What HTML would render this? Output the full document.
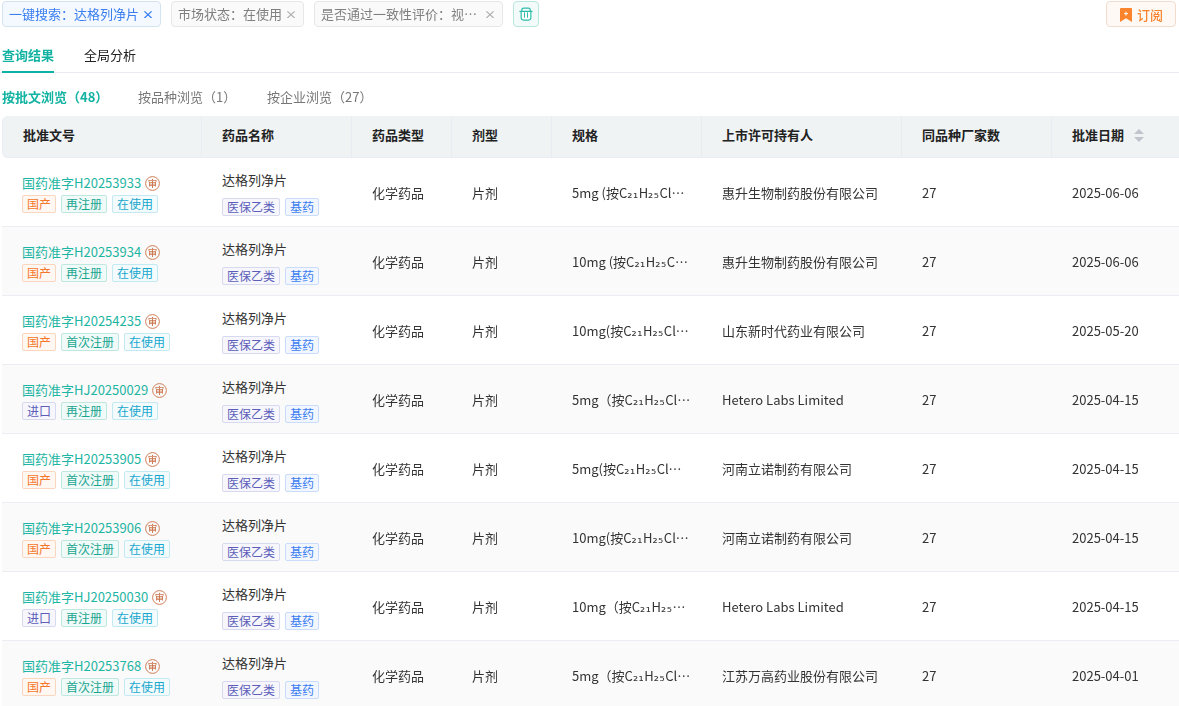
<!DOCTYPE html>
<html lang="zh-CN">
<head>
<meta charset="utf-8">
<title>查询结果</title>
<style>
*{box-sizing:border-box;margin:0;padding:0}
html,body{width:1179px;height:706px;overflow:hidden;background:#fff}
body{font-family:"Noto Sans CJK SC","Liberation Sans",sans-serif;font-size:13px;color:#333;position:relative}
.ftag{position:absolute;top:1px;height:26px;border:1px solid #e8e7e8;border-radius:4px;background:#fafafa;color:#7f7f80;font-size:13px;line-height:24px;padding-left:6px;white-space:nowrap}
.ftag.blue{background:#f4f8ff;border-color:#d4e3f0;color:#3a7ff0}
.ftag .tx{display:inline-block;vertical-align:top;overflow:hidden}
.ftag svg{position:absolute;right:8px;top:9px}
.trash{position:absolute;left:513px;top:1px;width:26px;height:26px;border:1px solid #b9e6df;border-radius:4px;background:#f3fbfa}
.trash svg{position:absolute;left:4px;top:4px}
.sub{position:absolute;left:1106px;top:1px;width:70px;height:26px;border:1px solid #f1dccd;border-radius:4px;background:#fff9f5;color:#f8842d;font-size:13px;line-height:24px;padding:1px 0 0 30px;font-weight:500;white-space:nowrap}
.sub svg{position:absolute;left:13px;top:6px}
.tabs{position:absolute;left:0;top:40px;width:1179px;height:33px;border-bottom:1px solid #e8e9f3}
.tab{position:absolute;top:0;height:33px;font-size:13px;line-height:30px;color:#222;white-space:nowrap}
.tab.on{color:#12b3a2;font-weight:700}
.tab.on:after{content:"";position:absolute;left:0;right:0;bottom:0;height:2px;background:#0cb3a4}
.stabs{position:absolute;left:2px;top:84px;height:26px;line-height:26px;font-size:13px;color:#777;white-space:nowrap}
.stabs span{position:absolute;top:0}
.stabs .on{color:#12b3a2;font-weight:700}
table{position:absolute;left:2px;top:116px;width:1200px;border-collapse:separate;border-spacing:0;table-layout:fixed}
th{height:42px;background:#eff3f4;font-weight:700;color:#222;text-align:left;padding:0 0 4px 20px;font-size:13px;border-right:1px solid #eaecf3;border-bottom:1px solid #e8eaf4;white-space:nowrap}
th:first-child{border-radius:6px 0 0 6px;border-left:1px solid #e9ecf5}
th .sort{display:inline-block;vertical-align:middle;margin-left:10px;margin-top:-1px}
td{height:69px;padding:0 0 0 20px;font-size:13px;color:#333;border-bottom:1px solid #ebedf3;vertical-align:middle;white-space:nowrap}
tr.alt td{background:#fafafa}
.no{color:#1db5a3;font-size:13px;line-height:24px;height:24px}
.sh{display:inline-block;vertical-align:top;width:15px;height:15px;margin:5px 0 0 4px;will-change:transform}
.sh svg{display:block}
.nm{line-height:24px;height:24px}
.tags{display:flex;height:18px}
.nm + .tags{margin-top:6px}
.t{display:inline-block;height:18px;line-height:16px;font-size:12px;padding:0 4px;border:1px solid;border-radius:2px;margin-right:5px}
.t.or{color:#f5762a;border-color:#fbd5bd;background:#fff7f1}
.t.gr{color:#19a590;border-color:#bfe7df;background:#f0faf8}
.t.cy{color:#17a7cd;border-color:#c3e9f3;background:#f3fbfd}
.t.pu{color:#5c5eba;border-color:#d7d9ef;background:#f6f6fc}
.t.bl{color:#3b7cf0;border-color:#c9dcfb;background:#f2f7ff}
.g{display:inline-block;will-change:transform;transform:translateY(-0.5px)}
.sub .tx,.tab span{display:inline-block}
.ftag .tx,.sub .tx,.tab span,.stabs span{will-change:transform}
.sp{white-space:nowrap}
.sb{font-family:"DejaVu Sans",sans-serif;letter-spacing:.5px}
</style>

</head>
<body>
<div class="ftag blue" style="left:2px;width:159px"><span class="tx">一键搜索：达格列净片</span><svg width="8" height="7.4" viewBox="0 0 8 8" preserveAspectRatio="none"><path d="M0.4 0.4L7.6 7.6M7.6 0.4L0.4 7.6" stroke="#3a7ff0" stroke-width="1.3" fill="none"/></svg></div>
<div class="ftag" style="left:171px;width:133px"><span class="tx">市场状态：在使用</span><svg width="8" height="7.4" viewBox="0 0 8 8" preserveAspectRatio="none"><path d="M0.4 0.4L7.6 7.6M7.6 0.4L0.4 7.6" stroke="#b0b0b2" stroke-width="1.2" fill="none"/></svg></div>
<div class="ftag" style="left:314px;width:189px"><span class="tx" style="width:160px">是否通过一致性评价：视…</span><svg width="8" height="7.4" viewBox="0 0 8 8" preserveAspectRatio="none"><path d="M0.4 0.4L7.6 7.6M7.6 0.4L0.4 7.6" stroke="#b0b0b2" stroke-width="1.2" fill="none"/></svg></div>
<div class="trash"><svg width="16" height="16" viewBox="0 0 16 16" fill="none" stroke="#2fbcaa" stroke-width="1.2" stroke-linecap="round"><path d="M3.15 5.3V11.6Q3.15 14.05 5.6 14.05H10.4Q12.85 14.05 12.85 11.6V5.3Z" fill="#fff" stroke="none"/><path d="M1.8 5.3H14.1"/><path d="M3.85 5.3V4Q3.85 2.05 5.8 2.05H10.3Q12.25 2.05 12.25 4V5.3"/><path d="M3.15 5.3V11.6Q3.15 14.05 5.6 14.05H10.4Q12.85 14.05 12.85 11.6V5.3"/><path d="M6.5 6.7V11.3M9.5 6.7V11.3" stroke-width="1"/></svg></div>
<div class="sub"><svg width="12" height="14" viewBox="0 0 12 14"><path d="M0 1Q0 0 1 0H11Q12 0 12 1V14L6 10.3L0 14Z" fill="#f9842c"/><path d="M4 5.6H8M6 3.6V7.6" stroke="#fff" stroke-width="1" fill="none"/></svg><span class="tx">订阅</span></div>
<div class="tabs">
  <div class="tab on" style="left:2px"><span>查询结果</span></div>
  <div class="tab" style="left:84px"><span>全局分析</span></div>
</div>
<div class="stabs">
  <span class="on" style="left:0">按批文浏览（48）</span>
  <span style="left:136px">按品种浏览（1）</span>
  <span style="left:265px">按企业浏览（27）</span>
</div>
<table>
<colgroup><col style="width:200px"><col style="width:150px"><col style="width:100px"><col style="width:100px"><col style="width:150px"><col style="width:200px"><col style="width:150px"><col style="width:150px"></colgroup>
<tr><th>批准文号</th><th>药品名称</th><th>药品类型</th><th>剂型</th><th>规格</th><th>上市许可持有人</th><th>同品种厂家数</th><th>批准日期<svg class="sort" width="10" height="13" viewBox="0 0 10 13"><path d="M5 0L10 5H0Z M0 8H10L5 13Z" fill="#c0c4cc"/></svg></th></tr>
<!--ROWS-->
<tr><td><div class="no">国药准字H20253933<span class="sh"><svg width="15" height="15" viewBox="0 0 15 15"><circle cx="7.5" cy="7.5" r="6.9" fill="none" stroke="#cf7d57" stroke-width="1"/><text x="7.5" y="11" font-size="9.5" font-weight="500" text-anchor="middle" fill="#cc7850">审</text></svg></span></div><div class="tags"><span class="t or">国产</span><span class="t gr">再注册</span><span class="t cy">在使用</span></div></td><td><div class="nm">达格列净片</div><div class="tags"><span class="t pu">医保乙类</span><span class="t bl">基药</span></div></td><td><span class="g">化学药品</span></td><td><span class="g">片剂</span></td><td><span class="g sp">5mg (按C<span class="sb">₂₁</span>H<span class="sb">₂₅</span>Cl…</span></td><td><span class="g">惠升生物制药股份有限公司</span></td><td><span class="g">27</span></td><td><span class="g">2025-06-06</span></td></tr>
<tr class="alt"><td><div class="no">国药准字H20253934<span class="sh"><svg width="15" height="15" viewBox="0 0 15 15"><circle cx="7.5" cy="7.5" r="6.9" fill="none" stroke="#cf7d57" stroke-width="1"/><text x="7.5" y="11" font-size="9.5" font-weight="500" text-anchor="middle" fill="#cc7850">审</text></svg></span></div><div class="tags"><span class="t or">国产</span><span class="t gr">再注册</span><span class="t cy">在使用</span></div></td><td><div class="nm">达格列净片</div><div class="tags"><span class="t pu">医保乙类</span><span class="t bl">基药</span></div></td><td><span class="g">化学药品</span></td><td><span class="g">片剂</span></td><td><span class="g sp">10mg (按C<span class="sb">₂₁</span>H<span class="sb">₂₅</span>C…</span></td><td><span class="g">惠升生物制药股份有限公司</span></td><td><span class="g">27</span></td><td><span class="g">2025-06-06</span></td></tr>
<tr><td><div class="no">国药准字H20254235<span class="sh"><svg width="15" height="15" viewBox="0 0 15 15"><circle cx="7.5" cy="7.5" r="6.9" fill="none" stroke="#cf7d57" stroke-width="1"/><text x="7.5" y="11" font-size="9.5" font-weight="500" text-anchor="middle" fill="#cc7850">审</text></svg></span></div><div class="tags"><span class="t or">国产</span><span class="t gr">首次注册</span><span class="t cy">在使用</span></div></td><td><div class="nm">达格列净片</div><div class="tags"><span class="t pu">医保乙类</span><span class="t bl">基药</span></div></td><td><span class="g">化学药品</span></td><td><span class="g">片剂</span></td><td><span class="g sp">10mg(按C<span class="sb">₂₁</span>H<span class="sb">₂₅</span>Cl…</span></td><td><span class="g">山东新时代药业有限公司</span></td><td><span class="g">27</span></td><td><span class="g">2025-05-20</span></td></tr>
<tr class="alt"><td><div class="no">国药准字HJ20250029<span class="sh"><svg width="15" height="15" viewBox="0 0 15 15"><circle cx="7.5" cy="7.5" r="6.9" fill="none" stroke="#cf7d57" stroke-width="1"/><text x="7.5" y="11" font-size="9.5" font-weight="500" text-anchor="middle" fill="#cc7850">审</text></svg></span></div><div class="tags"><span class="t pu">进口</span><span class="t gr">再注册</span><span class="t cy">在使用</span></div></td><td><div class="nm">达格列净片</div><div class="tags"><span class="t pu">医保乙类</span><span class="t bl">基药</span></div></td><td><span class="g">化学药品</span></td><td><span class="g">片剂</span></td><td><span class="g sp">5mg（按C<span class="sb">₂₁</span>H<span class="sb">₂₅</span>Cl…</span></td><td><span class="g">Hetero Labs Limited</span></td><td><span class="g">27</span></td><td><span class="g">2025-04-15</span></td></tr>
<tr><td><div class="no">国药准字H20253905<span class="sh"><svg width="15" height="15" viewBox="0 0 15 15"><circle cx="7.5" cy="7.5" r="6.9" fill="none" stroke="#cf7d57" stroke-width="1"/><text x="7.5" y="11" font-size="9.5" font-weight="500" text-anchor="middle" fill="#cc7850">审</text></svg></span></div><div class="tags"><span class="t or">国产</span><span class="t gr">首次注册</span><span class="t cy">在使用</span></div></td><td><div class="nm">达格列净片</div><div class="tags"><span class="t pu">医保乙类</span><span class="t bl">基药</span></div></td><td><span class="g">化学药品</span></td><td><span class="g">片剂</span></td><td><span class="g sp">5mg(按C<span class="sb">₂₁</span>H<span class="sb">₂₅</span>Cl…</span></td><td><span class="g">河南立诺制药有限公司</span></td><td><span class="g">27</span></td><td><span class="g">2025-04-15</span></td></tr>
<tr class="alt"><td><div class="no">国药准字H20253906<span class="sh"><svg width="15" height="15" viewBox="0 0 15 15"><circle cx="7.5" cy="7.5" r="6.9" fill="none" stroke="#cf7d57" stroke-width="1"/><text x="7.5" y="11" font-size="9.5" font-weight="500" text-anchor="middle" fill="#cc7850">审</text></svg></span></div><div class="tags"><span class="t or">国产</span><span class="t gr">首次注册</span><span class="t cy">在使用</span></div></td><td><div class="nm">达格列净片</div><div class="tags"><span class="t pu">医保乙类</span><span class="t bl">基药</span></div></td><td><span class="g">化学药品</span></td><td><span class="g">片剂</span></td><td><span class="g sp">10mg(按C<span class="sb">₂₁</span>H<span class="sb">₂₅</span>Cl…</span></td><td><span class="g">河南立诺制药有限公司</span></td><td><span class="g">27</span></td><td><span class="g">2025-04-15</span></td></tr>
<tr><td><div class="no">国药准字HJ20250030<span class="sh"><svg width="15" height="15" viewBox="0 0 15 15"><circle cx="7.5" cy="7.5" r="6.9" fill="none" stroke="#cf7d57" stroke-width="1"/><text x="7.5" y="11" font-size="9.5" font-weight="500" text-anchor="middle" fill="#cc7850">审</text></svg></span></div><div class="tags"><span class="t pu">进口</span><span class="t gr">再注册</span><span class="t cy">在使用</span></div></td><td><div class="nm">达格列净片</div><div class="tags"><span class="t pu">医保乙类</span><span class="t bl">基药</span></div></td><td><span class="g">化学药品</span></td><td><span class="g">片剂</span></td><td><span class="g sp">10mg（按C<span class="sb">₂₁</span>H<span class="sb">₂₅</span>…</span></td><td><span class="g">Hetero Labs Limited</span></td><td><span class="g">27</span></td><td><span class="g">2025-04-15</span></td></tr>
<tr class="alt"><td><div class="no">国药准字H20253768<span class="sh"><svg width="15" height="15" viewBox="0 0 15 15"><circle cx="7.5" cy="7.5" r="6.9" fill="none" stroke="#cf7d57" stroke-width="1"/><text x="7.5" y="11" font-size="9.5" font-weight="500" text-anchor="middle" fill="#cc7850">审</text></svg></span></div><div class="tags"><span class="t or">国产</span><span class="t gr">首次注册</span><span class="t cy">在使用</span></div></td><td><div class="nm">达格列净片</div><div class="tags"><span class="t pu">医保乙类</span><span class="t bl">基药</span></div></td><td><span class="g">化学药品</span></td><td><span class="g">片剂</span></td><td><span class="g sp">5mg（按C<span class="sb">₂₁</span>H<span class="sb">₂₅</span>Cl…</span></td><td><span class="g">江苏万高药业股份有限公司</span></td><td><span class="g">27</span></td><td><span class="g">2025-04-01</span></td></tr>
<!--/ROWS-->
</table>
</body>
</html>
